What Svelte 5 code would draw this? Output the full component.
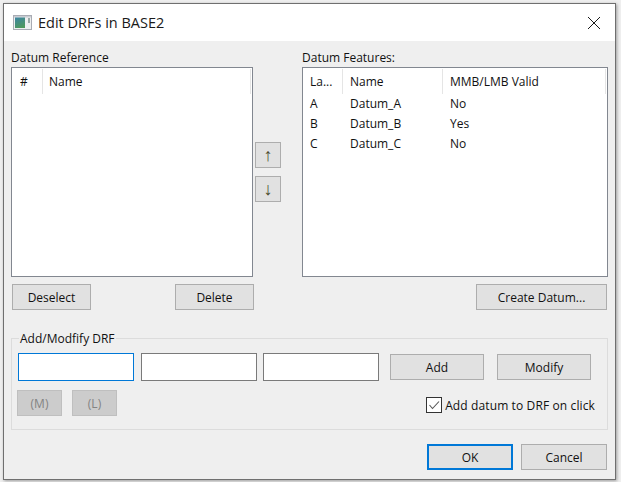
<script>
  const features = [
    { label: 'A', name: 'Datum_A', valid: 'No' },
    { label: 'B', name: 'Datum_B', valid: 'Yes' },
    { label: 'C', name: 'Datum_C', valid: 'No' }
  ];
</script>

<div class="screen">
  <div class="window">
    <header class="titlebar">
      <svg class="appicon" width="19" height="15" viewBox="0 0 19 15" aria-hidden="true">
        <defs>
          <linearGradient id="g" x1="0.2" y1="0" x2="0.6" y2="1">
            <stop offset="0" stop-color="#3d86a0" />
            <stop offset="1" stop-color="#4f9a5c" />
          </linearGradient>
        </defs>
        <rect x="0.5" y="0.5" width="18" height="14" fill="#eef0f0" stroke="#a9acb4" />
        <rect x="1" y="1" width="17" height="1.5" fill="#c9ccd2" />
        <rect x="2" y="2.5" width="10" height="10.5" fill="url(#g)" />
        <rect x="15" y="3" width="2" height="5" fill="#9aa8a6" />
      </svg>
      <span class="title">Edit DRFs in BASE2</span>
      <svg class="close" width="14" height="14" viewBox="0 0 14 14" aria-hidden="true">
        <path d="M1 1L13 13M13 1L1 13" stroke="#1a1a1a" stroke-width="1" fill="none" />
      </svg>
    </header>

    <main class="body">
      <div class="lists">
        <section class="col left">
          <div class="label">Datum Reference</div>
          <div class="list">
            <div class="head">
              <span class="hc c-num">#</span>
              <span class="hc c-fill">Name</span>
            </div>
          </div>
          <div class="btnrow spread">
            <button class="btn deselect">Deselect</button>
            <button class="btn delete">Delete</button>
          </div>
        </section>

        <div class="arrows">
          <button class="btn arrow">↑</button>
          <button class="btn arrow">↓</button>
        </div>

        <section class="col right">
          <div class="label">Datum Features:</div>
          <div class="list">
            <div class="head">
              <span class="hc c-la">La...</span>
              <span class="hc c-name">Name</span>
              <span class="hc c-fill c-val">MMB/LMB Valid</span>
            </div>
            {#each features as f}
              <div class="row">
                <span class="c-la">{f.label}</span>
                <span class="c-name">{f.name}</span>
                <span class="c-val">{f.valid}</span>
              </div>
            {/each}
          </div>
          <div class="btnrow end">
            <button class="btn create">Create Datum...</button>
          </div>
        </section>
      </div>

      <fieldset class="group">
        <legend>Add/Modfify DRF</legend>
        <div class="grouprow first">
          <div class="field focused"></div>
          <div class="field"></div>
          <div class="field third"></div>
          <button class="btn add">Add</button>
          <button class="btn modify">Modify</button>
        </div>
        <div class="grouprow second">
          <button class="btn small" disabled>(M)</button>
          <button class="btn small" disabled>(L)</button>
          <label class="check">
            <span class="box">
              <svg width="14" height="14" viewBox="0 0 14 14" aria-hidden="true">
                <path d="M2.5 7L5.5 10.5L12 3.5" stroke="#555" stroke-width="1.1" fill="none" />
              </svg>
            </span>
            Add datum to DRF on click
          </label>
        </div>
      </fieldset>

      <footer class="footer">
        <button class="btn ok">OK</button>
        <button class="btn cancel">Cancel</button>
      </footer>
    </main>
  </div>
</div>

<style>
  :global(body) {
    margin: 0;
    background: #efefef;
  }
  .screen {
    width: 621px;
    height: 482px;
    box-sizing: border-box;
    padding: 3px 5px 2px 3px;
    background: #efefef;
    font-family: "Open Sans", "Noto Sans", sans-serif;
    font-size: 12px;
    color: #111;
  }
  .window {
    box-sizing: border-box;
    height: 477px;
    display: flex;
    flex-direction: column;
    border: 1px solid #6f6f6f;
    background: #efefef;
    box-shadow: 1px 1px 3px rgba(0, 0, 0, 0.35);
  }
  .titlebar {
    height: 37px;
    flex: none;
    display: flex;
    align-items: center;
    background: #fff;
    padding: 0 14px 0 9px;
  }
  .appicon { margin-right: 6px; }
  .title { font-size: 14.5px; color: #1a1a1a; }
  .close { margin-left: auto; }
  .body {
    flex: 1;
    display: flex;
    flex-direction: column;
    padding: 7px 7px 0 7px;
    min-height: 0;
  }
  .lists { display: flex; }
  .col { display: flex; flex-direction: column; }
  .left { width: 243px; }
  .right { width: 306px; }
  .label { height: 19px; line-height: 19px; }
  .list {
    box-sizing: border-box;
    height: 210px;
    border: 1px solid #828790;
    background: #fff;
  }
  .left .list { width: 242px; }
  .head { display: flex; height: 25px; margin-top: 1px; padding-right: 1px; }
  .hc {
    box-sizing: border-box;
    border-right: 1px solid #e5e5e5;
    line-height: 25px;
    padding-left: 6px;
  }
  .hc.c-num { width: 31px; padding-left: 8px; }
  .c-la { width: 40px; box-sizing: border-box; }
  .hc.c-la, .row .c-la { padding-left: 7px; }
  .c-name { width: 100px; box-sizing: border-box; }
  .hc.c-name, .row .c-name, .hc.c-val, .row .c-val { padding-left: 7px; }
  .c-fill { flex: 1; }
  .row { display: flex; height: 20px; line-height: 20px; }
  .btn {
    box-sizing: border-box;
    height: 26px;
    padding: 0;
    background: #e1e1e1;
    border: 1px solid #adadad;
    border-radius: 0;
    font: inherit;
    color: #111;
  }
  .btnrow { display: flex; margin-top: 7px; }
  .spread { justify-content: space-between; padding-left: 1px; }
  .end { justify-content: flex-end; padding-right: 1px; }
  .deselect { width: 79px; }
  .delete { width: 79px; margin-right: 0; }
  .create { width: 131px; }
  .arrows {
    width: 48px;
    display: flex;
    flex-direction: column;
    gap: 8px;
    padding: 94px 0 0 1px;
    box-sizing: border-box;
  }
  .arrow {
    width: 26px;
    font-family: "Liberation Sans", sans-serif;
    font-size: 18px;
    color: #4a4a2a;
    line-height: 1;
  }
  .group {
    margin: 20px 0 0 0;
    padding: 0 6px;
    width: 597px;
    height: 100px;
    box-sizing: border-box;
    border: 1px solid #dcdcdc;
    min-width: 0;
  }
  legend {
    padding: 0 1px;
    margin-left: 1px;
    line-height: 17px;
  }
  .grouprow { display: flex; align-items: center; }
  .first { margin-top: 6px; }
  .field {
    box-sizing: border-box;
    width: 116px;
    height: 28px;
    background: #fff;
    border: 1px solid #7a7a7a;
    margin-right: 7px;
  }
  .field:nth-child(2) { margin-right: 6px; }
  .field.focused { border-color: #0078d7; }
  .add { width: 94px; margin-left: 4px; }
  .modify { width: 94px; margin-left: 13px; }
  .second { margin-top: 9px; }
  .small {
    width: 45px;
    margin-right: 10px;
    background: #ccc;
    border-color: #bfbfbf;
    color: #838383;
  }
  .small:first-child { margin-left: -1px; }
  .check {
    margin-left: auto;
    margin-right: 6px;
    margin-top: 4px;
    display: flex;
    align-items: center;
    gap: 3px;
    letter-spacing: 0.12px;
  }
  .box {
    box-sizing: border-box;
    width: 16px;
    height: 16px;
    border: 1px solid #333;
    background: #fff;
    display: flex;
    align-items: center;
    justify-content: center;
  }
  .footer {
    display: flex;
    justify-content: flex-end;
    gap: 8px;
    margin-top: 14px;
    padding-right: 1px;
  }
  .ok, .cancel { width: 86px; }
  .ok { border: 2px solid #0078d7; }
</style>
